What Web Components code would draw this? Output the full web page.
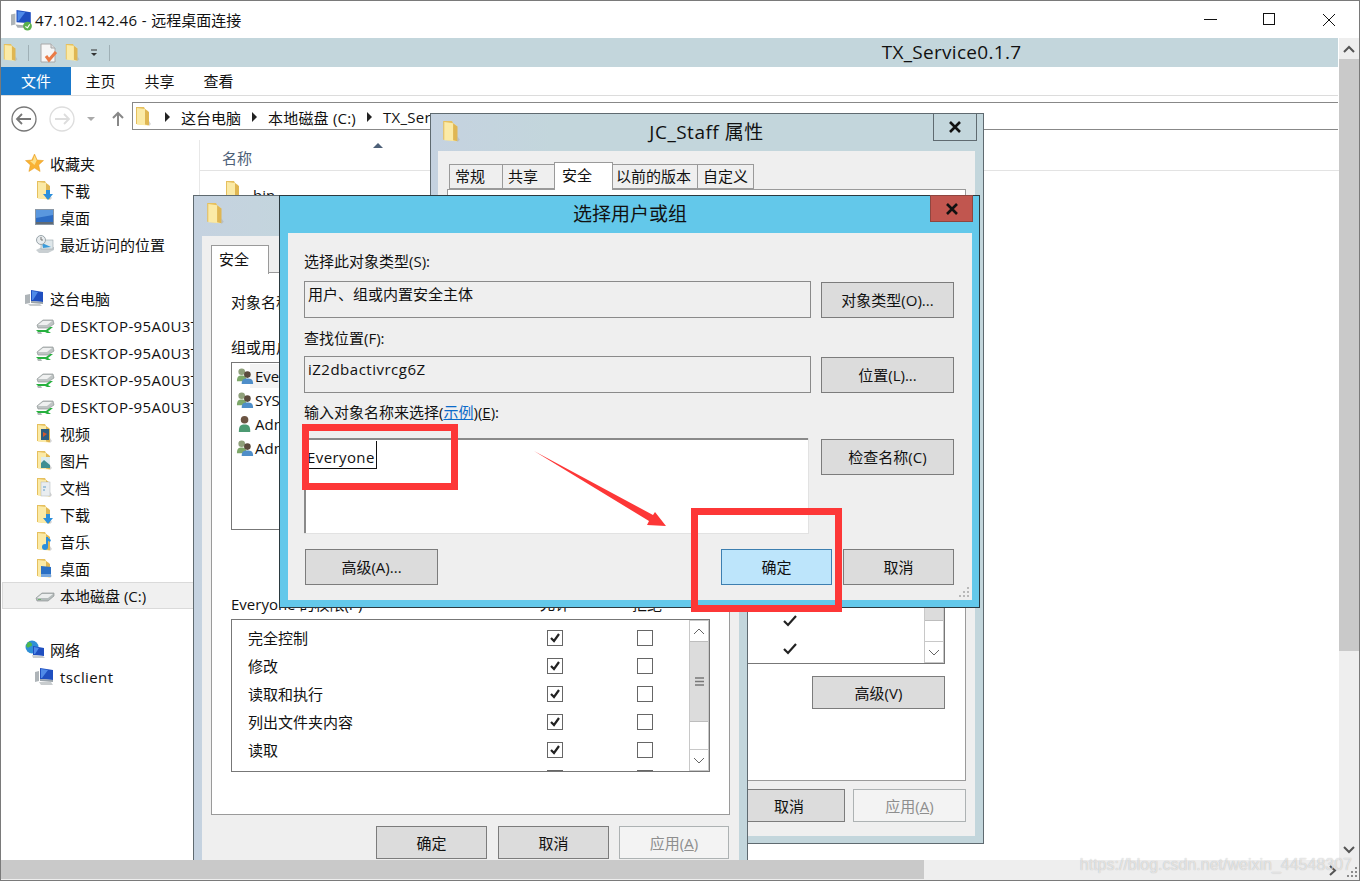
<!doctype html>
<html lang="zh">
<head>
<meta charset="utf-8">
<title>47.102.142.46 - 远程桌面连接</title>
<style>
  html, body { margin: 0; padding: 0; background: #fff; }
  body { width: 1360px; height: 881px; overflow: hidden; font: 15px "Open Sans", "Noto Sans CJK SC", sans-serif; color: #111; }
</style>
</head>
<body>
<rdp-app></rdp-app>
<script>
// tall narrow win8 folder, the special folders draw on top of it
const FOLDER = `<path d="M2 0h8l1 2v16l-9-1z" fill="#e6c05e"/><path d="M3 1l8 1 3 2v14.500l-11-1z" fill="#fbeaa6"/><path d="M11 2l4 3v13.500l-4-1z" fill="#dfb653"/><path d="M15 14l2 3-2 2z" fill="#aaa" opacity=".5"/>`;

const ICONS = {
  folder: FOLDER,
  star: `<path d="M9.500 0l2.700 6 6.300.6-4.800 4.300 1.400 6.600-5.600-3.400-5.600 3.400 1.400-6.600L.500 6.600 6.800 6z" fill="#f9b233" stroke="#e59a20" stroke-width=".5"/><path d="M9.500 1.500l2.200 5-2.200 4.500-4.500-4 3-.5z" fill="#fde08a"/>`,
  download: FOLDER + `<path d="M11 9h4v4h3l-5 6-5-6h3z" fill="#2b8fdc"/>`,
  desktop: `<rect x="0" y="1" width="19" height="16" fill="#8a97a5"/><rect x="1" y="2" width="17" height="12" fill="#2d6cc4"/><path d="M1 2h17v5L1 10z" fill="#5a97de"/><rect x="1" y="14" width="17" height="2" fill="#5f6a74"/>`,
  recent: `<path d="M1 15l6-3h12v3l-6 3H4z" fill="#c9cfd2"/><rect x="6" y="5" width="12" height="9" fill="#dfe7ea" stroke="#9aa5aa" stroke-width=".6"/><path d="M7 8l9 4-8 1z" fill="#3a9ad9"/><circle cx="6" cy="5" r="4.500" fill="#e8ecee" stroke="#9aa5aa"/><path d="M6 2v3h2" stroke="#777" fill="none"/>`,
  computer: `<path d="M6 1l12 2v10L6 12z" fill="#1f4fc0"/><path d="M7 2l6 1-5 8-1 0z" fill="#4f8ae8"/><path d="M6 12l12 1 0 2-12-1z" fill="#9aa3aa"/><path d="M0 6l5-1v9l-5 1z" fill="#aeb4b8"/><path d="M3 15l12 0 2 2H5z" fill="#c8ccce"/>`,
  netdrive: `<path d="M2 9l6-5h10l1 4-6 4H3z" fill="#bfc4c4" stroke="#8f9696" stroke-width=".7"/><path d="M3 9l5-4h9l-5 4z" fill="#f0f1f1"/><path d="M1 14h10l4-3h3l-5 4 3 2h-4l-2-1H3z" fill="#27b13f"/><path d="M2 16h4l1 2H3z" fill="#b3b8b8"/>`,
  videos: FOLDER + `<rect x="6" y="5" width="8" height="11" fill="#2c5d82"/><path d="M8 8l4 2-4 3z" fill="#d5572c"/>`,
  pictures: FOLDER + `<rect x="6" y="6" width="9" height="11" fill="#dcecef"/><path d="M6 12l3-3 6 5v3H6z" fill="#3f8f92"/>`,
  docs: FOLDER + `<rect x="6" y="4" width="9" height="14" fill="#e9edf0" stroke="#aeb6bb" stroke-width=".5"/><path d="M8 9h3M8 12h2" stroke="#5b9bc7"/>`,
  music: FOLDER + `<path d="M12 5v10" stroke="#2b8fdc" stroke-width="2"/><circle cx="10" cy="15" r="3" fill="#2b8fdc"/><path d="M12 5l4 3-1 2-3-2z" fill="#2b8fdc"/>`,
  deskfolder: FOLDER + `<path d="M6 7l10 1v10H6z" fill="#2a6fc4"/><path d="M6 15h10v3H6z" fill="#77a7de"/>`,
  disk: `<path d="M1 12l6-5h12v3l-6 5H2z" fill="#b4bbbb" stroke="#8f9696" stroke-width=".7"/><path d="M2 12l5-4h11l-5 4z" fill="#eceeee"/><path d="M3 13h3v1H3z" fill="#6fb36f"/>`,
  globe: `<circle cx="7" cy="7" r="6.500" fill="#2f8fd6"/><path d="M3 2c3 0 4 1 4 3s-3 1-4 3l-2-2zM8 9l3-1 1 2-3 3z" fill="#4db84c"/><path d="M8 6l11 2v8L8 15z" fill="#1f4fc0"/><path d="M9 7l5 1-4 6H9z" fill="#4f8ae8"/><path d="M7 15l11 1 2 2H8z" fill="#c8ccce"/>`,
  monitor: `<path d="M5 1l13 2v10L5 12z" fill="#1f4fc0"/><path d="M6 2l7 1-6 8H6z" fill="#4f8ae8"/><path d="M0 5l4-1v10l-4 1z" fill="#aeb4b8"/><path d="M5 12l13 1v2L5 14z" fill="#9aa3aa"/><path d="M4 15h12l2 3H6z" fill="#c8ccce"/>`,
  rdp: `<path d="M5 1l13 2v10L5 12z" fill="#1f4fc0"/><path d="M6 2l7 1-6 8H6z" fill="#4f8ae8"/><path d="M0 5l4-1v10l-4 1z" fill="#aeb4b8"/><path d="M4 14l10 1 1 2H6z" fill="#a9aeb2"/><circle cx="15" cy="15.500" r="4" fill="#5bb04c"/><path d="M13 16l2 1 2-3" stroke="#fff" fill="none"/>`,
  group: `<circle cx="6" cy="5" r="3.500" fill="#8fa07a"/><path d="M1 15c0-5 2-6 5-6s5 1 5 6z" fill="#7da86a"/><circle cx="12" cy="8" r="3.500" fill="#5a4a3c"/><path d="M6 18c0-5 2-6 6-6s6 1 6 6z" fill="#4f8ec9"/>`,
  user: `<circle cx="9" cy="5" r="4" fill="#6b5442"/><path d="M3 18c0-7 2-8 6-8s6 1 6 8z" fill="#4c9a72"/>`,
  note: `<path d="M2 1h10l4 4v14H2z" fill="#f6f6f6" stroke="#a8a8a8"/><path d="M12 1v4h4" fill="#ddd" stroke="#a8a8a8"/><path d="M7 13l3 4 7-8" fill="none" stroke="#ea7a45" stroke-width="3"/>`
};

class AppIcon extends HTMLElement {
  constructor() {
    super();
    this.attachShadow({ mode: 'open' });
  }
  connectedCallback() {
    const name = this.getAttribute('name');
    const size = this.getAttribute('size') || 20;
    this.shadowRoot.innerHTML = `
      <style>:host { display: inline-block; line-height: 0; flex: none; } svg { display: block; }</style>
      <svg width="${size}" height="${size}" viewBox="0 0 20 20">${ICONS[name] || ''}</svg>`;
  }
}

class WinButton extends HTMLElement {
  constructor() {
    super();
    this.attachShadow({ mode: 'open' }).innerHTML = `
      <style>
        :host {
          display: flex; align-items: center; justify-content: center;
          box-sizing: border-box; height: 36px; border: 1px solid #7c7c7c; padding-bottom: 1px;
          background: #dcdcdc; font-size: 15px; color: #111; flex: none; white-space: nowrap;
        }
        :host([primary]) { background: #bde5fb; border-color: #3d7fb0; }
        :host([disabled]) { background: #f3f3f3; border-color: #adb2b3; color: #8e8e8e; }
      </style>
      <slot></slot>`;
  }
}

class NavItem extends HTMLElement {
  constructor() {
    super();
    this.attachShadow({ mode: 'open' });
  }
  connectedCallback() {
    const head = this.hasAttribute('head');
    this.shadowRoot.innerHTML = `
      <style>
        :host {
          display: flex; align-items: center; gap: 5px; height: 27px; box-sizing: border-box;
          padding-left: ${head ? 24 : 34}px; white-space: nowrap; overflow: hidden; font-size: 15px; color: #111;
        }
        :host([selected]) { background: #f0f0f0; box-shadow: inset 0 0 0 1px #dadada; margin-left: 1px; padding-left: 33px; }
      </style>
      <app-icon name="${this.getAttribute('icon')}"></app-icon><slot></slot>`;
  }
}

class FloatWindow extends HTMLElement {
  constructor() {
    super();
    this.attachShadow({ mode: 'open' });
  }
  connectedCallback() {
    const a = n => this.getAttribute(n);
    const front = this.hasAttribute('front');
    this.shadowRoot.innerHTML = `
      <style>
        :host {
          position: absolute; box-sizing: border-box; left: ${a('x')}px; top: ${a('y')}px; width: ${a('w')}px; height: ${a('h')}px;
          background: ${front ? '#63c8ea' : 'linear-gradient(90deg,#c5d2e0,#c3d6dc 22%)'};
          border: 1px solid ${front ? '#2b3a40' : '#5f6a70'};
          display: flex; flex-direction: column;
          padding: 0 ${a('padr') || 8}px ${a('padb') || 7}px ${a('padl') || 8}px;
        }
        .bar { height: ${a('bar') || 36}px; flex: none; display: flex; align-items: center; justify-content: center; font-size: 19px; color: #111; position: relative; box-sizing: border-box; padding-bottom: 3px; }
        .bar app-icon { position: absolute; left: ${a('iconx') || 3}px; top: 7px; }
        .close { position: absolute; right: ${front ? -1 : -2}px; top: -1px; height: ${front ? 27 : 28}px; width: ${front ? 43 : 44}px; box-sizing: border-box;
          border: 1px solid ${front ? '#8f4640' : '#5f6a70'}; background: ${front ? '#c1564f' : '#c3d6dc'};
          display: flex; align-items: center; justify-content: center; }
        .body { flex: 1; min-height: 0; background: #efefef; position: relative; }
      </style>
      <div class="bar">
        ${front ? '' : '<app-icon name="folder" size="22"></app-icon>'}
        <slot name="title"></slot>
        ${a('close') !== null ? `<div class="close"><svg width="14" height="12" viewBox="0 0 14 12"><path d="M2 1l10 10M12 1L2 11" stroke="#111" stroke-width="2.600"/></svg></div>` : ''}
      </div>
      <div class="body"><slot></slot></div>`;
  }
}

class TabStrip extends HTMLElement {
  constructor() {
    super();
    this.attachShadow({ mode: 'open' }).innerHTML = `
      <style>
        :host { display: flex; align-items: flex-end; height: 25px; font-size: 15px; position: relative; z-index: 1; }
        ::slotted(span) { box-sizing: border-box; height: 25px; border: 1px solid #9a9a9a; margin-left: -1px;
          padding-left: 5px; padding-bottom: 2px; display: flex; align-items: center; background: #efefef; }
        ::slotted(span.on) { height: 28px; background: #fff; border-bottom: 0; position: relative; top: 1px; }
      </style>
      <slot></slot>`;
  }
}

class PermRow extends HTMLElement {
  constructor() {
    super();
    this.attachShadow({ mode: 'open' });
  }
  connectedCallback() {
    this.shadowRoot.innerHTML = `
      <style>
        :host { display: grid; grid-template-columns: 299px 90px 1fr; align-items: center; height: 28px; padding-left: 16px; font-size: 15px; }
        span { margin-top: -2px; }
        i { display: block; box-sizing: border-box; width: 16px; height: 16px; border: 1px solid #666; background: #fff; }
        svg { display: block; margin: 1px; }
      </style>
      <span><slot></slot></span>
      <i><svg width="12" height="12" viewBox="0 0 12 12"><path d="M2 6l3 3 5-7" fill="none" stroke="#222" stroke-width="2.200"/></svg></i>
      <i></i>`;
  }
}

class VScroll extends HTMLElement {
  constructor() {
    super();
    this.attachShadow({ mode: 'open' });
  }
  connectedCallback() {
    this.shadowRoot.innerHTML = `
      <style>
        :host { display: flex; flex-direction: column; width: 20px; box-sizing: border-box; border: 1px solid #c8c8c8; background: #fff; flex: none; }
        .b { height: 20px; display: flex; align-items: center; justify-content: center; background: #fff; flex: none; }
        .t { height: ${this.getAttribute('thumb')}px; background: #dcdcdc; border: solid #bdbdbd; border-width: 1px 0; box-sizing: border-box; display: flex; align-items: center; justify-content: center; flex: none; }
        .f { flex: 1; }
        .d { height: 20px; display: flex; align-items: center; justify-content: center; border-top: 1px solid #c8c8c8; flex: none; }
      </style>
      <div class="b"><svg width="12" height="7" viewBox="0 0 12 7"><path d="M1 6l5-5 5 5" fill="none" stroke="#666"/></svg></div>
      <div class="t"><svg width="9" height="9" viewBox="0 0 9 9"><path d="M0 1h9M0 4.500h9M0 8h9" stroke="#777" stroke-width="1.500"/></svg></div>
      <div class="f"></div>
      <div class="d"><svg width="12" height="7" viewBox="0 0 12 7"><path d="M1 1l5 5 5-5" fill="none" stroke="#666"/></svg></div>`;
  }
}

class RedFrame extends HTMLElement {
  constructor() {
    super();
    this.attachShadow({ mode: 'open' });
  }
  connectedCallback() {
    const a = n => this.getAttribute(n);
    this.shadowRoot.innerHTML = `
      <style>
        :host { position: absolute; box-sizing: border-box; left: ${a('x')}px; top: ${a('y')}px; width: ${a('w')}px; height: ${a('h')}px; border: 7px solid #fd3737; }
      </style>`;
  }
}

class ExplorerTop extends HTMLElement {
  constructor() {
    super();
    this.attachShadow({ mode: 'open' }).innerHTML = `
      <style>
        :host { display: block; }
        .title { height: 37px; display: flex; align-items: center; padding-left: 10px; gap: 2px; font-size: 15px; position: relative; }
        .lat { letter-spacing: .38px; }
        .caps { position: absolute; right: 0; top: 0; display: flex; }
        .caps div { width: 59px; height: 37px; display: flex; align-items: center; justify-content: center; }
        .qat { height: 29px; margin-right: 21px; background: #c3d6dc; display: flex; align-items: center; position: relative; padding-left: 1px; }
        .qat b { width: 1px; height: 16px; background: #9fb0b6; }
        .qat .name { position: absolute; left: 0; right: 0; padding-left: 564px; text-align: center; font-size: 19px; letter-spacing: .3px; top: 1px; }
        .tabs { height: 28px; display: flex; align-items: center; margin-right: 21px; font-size: 15px; }
        .tabs span { width: 59px; text-align: center; margin-top: -1px; }
        .tabs .file { width: 70px; height: 28px; line-height: 29px; background: #1a79cb; color: #fff; margin-top: 0; }
        .rule { height: 1px; background: #dcdcdc; margin-right: 21px; }
        .addr { height: 35px; display: flex; align-items: center; margin-right: 21px; position: relative; }
        .nav { width: 131px; display: flex; align-items: center; margin-top: 10px; }
        .box { flex: 1; box-sizing: border-box; height: 28px; border: 1px solid #888; border-right: 0; display: flex; align-items: center; padding: 2px 0 0 1px; font-size: 15px; gap: 11px; margin-top: 5px; white-space: nowrap; }
        .box i { width: 0; height: 0; border: 5px solid transparent; border-left: 5px solid #222; border-right: 0; }
      </style>
      <div class="title">
        <app-icon name="rdp" size="22"></app-icon>
        <span><span class="lat">47.102.142.46 - </span>远程桌面连接</span>
        <div class="caps">
          <div><svg width="14" height="2"><rect width="13" height="1" fill="#111"/></svg></div>
          <div><svg width="13" height="13"><rect x=".5" y=".5" width="11" height="11" fill="none" stroke="#111"/></svg></div>
          <div style="margin-right:1px"><svg width="14" height="14"><path d="M1 1l12 12M13 1L1 13" stroke="#111"/></svg></div>
        </div>
      </div>
      <div class="qat">
        <app-icon name="folder" size="18"></app-icon>
        <b style="margin-left:8px"></b>
        <app-icon name="note" size="20" style="margin-left:10px"></app-icon>
        <app-icon name="folder" size="18" style="margin-left:5px"></app-icon>
        <svg width="12" height="12" viewBox="0 0 12 12" style="margin-left:6px"><path d="M3 3h6" stroke="#333"/><path d="M3 6h6l-3 3z" fill="#333"/></svg>
        <b style="margin-left:9px"></b>
        <div class="name">TX_Service0.1.7</div>
      </div>
      <div class="tabs">
        <span class="file">文件</span><span>主页</span><span>共享</span><span>查看</span>
      </div>
      <div class="rule"></div>
      <div class="addr">
        <div class="nav">
          <svg width="131" height="28" viewBox="0 0 131 28">
            <circle cx="23" cy="14" r="12" fill="#fff" stroke="#777" stroke-width="1.300"/>
            <path d="M30 14H16M21 9l-5 5 5 5" fill="none" stroke="#777" stroke-width="1.800"/>
            <circle cx="61" cy="14" r="12" fill="#fff" stroke="#ddd" stroke-width="1.300"/>
            <path d="M54 14h14M63 9l5 5-5 5" fill="none" stroke="#ddd" stroke-width="1.800"/>
            <path d="M86 12h8l-4 4z" fill="#aaa"/>
            <path d="M117 21V8M112 13l5-5 5 5" fill="none" stroke="#888" stroke-width="2"/>
          </svg>
        </div>
        <div class="box">
          <app-icon name="folder" size="20"></app-icon><i></i><span>这台电脑</span><i></i><span style="letter-spacing:.2px">本地磁盘 (C:)</span><i></i><span style="letter-spacing:.3px">TX_Service</span>
        </div>
      </div>`;
  }
}

class NavPane extends HTMLElement {
  constructor() {
    super();
    this.attachShadow({ mode: 'open' }).innerHTML = `
      <style>
        :host { display: block; width: 193px; padding-top: 19px; flex: none; }
        .gap { height: 27px; }
        .lat { letter-spacing: .4px; }
      </style>
      <nav-item head icon="star">收藏夹</nav-item>
      <nav-item icon="download">下载</nav-item>
      <nav-item icon="desktop">桌面</nav-item>
      <nav-item icon="recent">最近访问的位置</nav-item>
      <div class="gap"></div>
      <nav-item head icon="computer">这台电脑</nav-item>
      <nav-item class="lat" icon="netdrive">DESKTOP-95A0U3T</nav-item>
      <nav-item class="lat" icon="netdrive">DESKTOP-95A0U3T</nav-item>
      <nav-item class="lat" icon="netdrive">DESKTOP-95A0U3T</nav-item>
      <nav-item class="lat" icon="netdrive">DESKTOP-95A0U3T</nav-item>
      <nav-item icon="videos">视频</nav-item>
      <nav-item icon="pictures">图片</nav-item>
      <nav-item icon="docs">文档</nav-item>
      <nav-item icon="download">下载</nav-item>
      <nav-item icon="music">音乐</nav-item>
      <nav-item icon="deskfolder">桌面</nav-item>
      <nav-item selected icon="disk">本地磁盘 (C:)</nav-item>
      <div class="gap"></div>
      <nav-item head icon="globe">网络</nav-item>
      <nav-item class="lat" icon="monitor">tsclient</nav-item>`;
  }
}

class FilePane extends HTMLElement {
  constructor() {
    super();
    this.attachShadow({ mode: 'open' }).innerHTML = `
      <style>
        :host { display: block; flex: 1; margin-left: 5px; margin-top: 9px; border-left: 1px solid #e8e8e8; }
        .head { height: 30px; border-bottom: 1px solid #e3e3e3; padding-left: 22px; line-height: 36px; color: #4d6078; font-size: 15px; position: relative; }
        .head i { position: absolute; left: 173px; top: 3px; width: 0; height: 0; border: 5px solid transparent; border-bottom: 5px solid #4d6078; border-top: 0; }
        .row { display: flex; align-items: flex-start; gap: 9px; padding: 10px 0 0 24px; }
        .row span { margin-top: 4px; }
      </style>
      <div class="head">名称<i></i></div>
      <div class="row"><app-icon name="folder" size="20"></app-icon><span>bin</span></div>`;
  }
}

class RdpApp extends HTMLElement {
  constructor() {
    super();
    this.attachShadow({ mode: 'open' }).innerHTML = `
      <style>
        :host { display: block; position: relative; width: 1360px; height: 881px; box-sizing: border-box; border: 1px solid #7a7a7a; overflow: hidden; background: #fff; }
        .main { position: absolute; inset: 0; display: flex; flex-direction: column; }
        .content { flex: 1; display: flex; min-height: 0; }
        .vbar { position: absolute; right: 0; top: 37px; bottom: 20px; width: 20px; background: #eee; display: flex; flex-direction: column; align-items: center; }
        .vbar .up, .vbar .dn { height: 21px; width: 100%; display: flex; align-items: center; justify-content: center; flex: none; }
        .vbar .th { height: 592px; width: 100%; background: #c9c9c9; flex: none; }
        .vbar .fill { flex: 1; }
        .hbar { position: absolute; left: 0; right: 0; bottom: 0; height: 20px; background: #eee; z-index: 5; }
        .hbar .th { position: absolute; left: 0; top: 0; bottom: 1px; width: 923px; background: #c9c9c9; }
        .hbar svg { position: absolute; }
        .mark { position: absolute; right: 7px; bottom: 6px; font: 16px "Liberation Sans", sans-serif; color: rgba(255,255,255,.6); text-shadow: 0 0 1px rgba(0,0,0,.28); z-index: 6; white-space: nowrap; }
        .lbl { font-size: 15px; display: block; white-space: nowrap; }
        .field { box-sizing: border-box; height: 37px; border: 1px solid #8a8a8a; padding: 2px 3px; font-size: 15px; }
        a { color: #0b6ac9; text-decoration: underline; }

        /* select users dialog */
        .sel { box-sizing: border-box; height: 100%; padding: 18px 17px 0 16px; display: grid; grid-template-columns: 507px 133px; column-gap: 10px; align-content: start; }
        .sel .lbl { grid-column: 1 / 3; height: 21px; line-height: 20px; margin-bottom: 7px; }
        .sel .field { margin-bottom: 10px; }
        .sel .field + win-button { align-self: start; margin-top: 1px; }
        .sel .area { box-sizing: border-box; width: 505px; height: 96px; background: #fff; border: solid #e2e2e2; border-width: 0 1px 1px 0; box-shadow: inset 2px 2px 0 #8a8a8a; padding: 9px 3px; font-size: 15px; line-height: 20px; }
        .sel .area + win-button { align-self: start; margin-top: 1px; }
        .sel .area span { border-bottom: 1px solid #111; border-right: 1px solid #111; letter-spacing: .4px; padding: 6px 1px 1px 0; }
        .foot { grid-column: 1 / 3; display: flex; gap: 11px; margin-top: 15px; padding-left: 1px; }
        .grip { position: absolute; right: 2px; bottom: 2px; }

        /* security page of the middle window */
        .panel { position: absolute; background: #fff; border: 1px solid #9a9a9a; box-sizing: border-box; }
        .list { position: absolute; box-sizing: border-box; border: 1px solid #777; background: #fff; }
        .member { display: flex; align-items: center; height: 24px; padding-left: 3px; font-size: 15px; white-space: nowrap; }
        .perm { display: flex; }
        .rows { flex: 1; padding-top: 4px; overflow: hidden; }
        .btnrow { position: absolute; display: flex; }
      </style>
      <div class="main">
        <explorer-top></explorer-top>
        <div class="content"><nav-pane></nav-pane><file-pane></file-pane></div>
      </div>
      <div class="vbar">
        <div class="up"><svg width="12" height="8" viewBox="0 0 12 8"><path d="M1 7l5-5 5 5" fill="none" stroke="#555" stroke-width="2"/></svg></div>
        <div class="th"></div><div class="fill"></div>
        <div class="dn"><svg width="12" height="8" viewBox="0 0 12 8"><path d="M1 1l5 5 5-5" fill="none" stroke="#555" stroke-width="2"/></svg></div>
      </div>

      <float-window x="429" y="112" w="554" h="731" close bar="37" iconx="3" padl="7">
        <span slot="title" style="letter-spacing:.5px">JC_Staff 属性</span>
        <tab-strip style="position:absolute;left:12px;top:13px">
          <span style="width:54px">常规</span><span style="width:53px">共享</span><span class="on" style="width:59px;padding-left:7px;padding-bottom:5px">安全</span><span style="width:86px;padding-left:3px">以前的版本</span><span style="width:57px">自定义</span>
        </tab-strip>
        <div class="panel" style="left:9px;top:38px;width:519px;height:592px"></div>
        <div class="list" style="left:119px;top:300px;width:388px;height:213px">
          <div style="position:absolute;inset:0;display:flex;flex-direction:column;align-items:flex-end"><v-scroll thumb="148" style="height:100%"></v-scroll></div>
          <svg style="position:absolute;left:224px;top:162px" width="16" height="44" viewBox="0 0 16 44"><path d="M2 7l4 4 8-9M2 35l4 4 8-9" fill="none" stroke="#222" stroke-width="2.200"/></svg>
        </div>
        <win-button style="position:absolute;left:374px;top:525px;width:133px;height:33px">高级(V)</win-button>
        <div class="btnrow" style="left:295px;top:638px;gap:8px">
          <win-button style="width:112px;height:33px">取消</win-button>
          <win-button disabled style="width:113px;height:33px"><span>应用(<u>A</u>)</span></win-button>
        </div>
      </float-window>

      <float-window x="192" y="194" w="555" h="700" bar="40" iconx="3">
        <tab-strip style="position:absolute;left:10px;top:8px;height:29px"><span class="on" style="height:29px;padding-left:7px;padding-bottom:3px;width:58px">安全</span></tab-strip>
        <div class="panel" style="left:9px;top:36px;width:519px;height:543px"></div>
        <span class="lbl" style="position:absolute;left:29px;top:55px">对象名称(O):</span>
        <span class="lbl" style="position:absolute;left:29px;top:100px">组或用户名(G):</span>
        <div class="list" style="left:29px;top:126px;width:300px;height:168px;padding:1px">
          <div class="member" style="background:linear-gradient(90deg,#fff 17px,#f3f3f3 17px)"><app-icon name="group" size="19"></app-icon>Everyone</div>
          <div class="member"><app-icon name="group" size="19"></app-icon>SYSTEM</div>
          <div class="member"><app-icon name="user" size="19"></app-icon>Administrator</div>
          <div class="member"><app-icon name="group" size="19"></app-icon>Administrators</div>
        </div>
        <span class="lbl" style="position:absolute;left:29px;top:357px">Everyone 的权限(P)</span>
        <span class="lbl" style="position:absolute;left:338px;top:357px">允许</span>
        <span class="lbl" style="position:absolute;left:430px;top:357px">拒绝</span>
        <div class="list perm" style="left:29px;top:383px;width:479px;height:153px">
          <div class="rows">
            <perm-row>完全控制</perm-row><perm-row>修改</perm-row><perm-row>读取和执行</perm-row><perm-row>列出文件夹内容</perm-row><perm-row>读取</perm-row><perm-row></perm-row>
          </div>
          <v-scroll thumb="81"></v-scroll>
        </div>
        <div class="btnrow" style="left:174px;top:590px;gap:11px">
          <win-button style="width:111px;height:33px">确定</win-button>
          <win-button style="width:111px;height:33px">取消</win-button>
          <win-button disabled style="width:110px;height:33px;margin-left:-1px"><span>应用(<u>A</u>)</span></win-button>
        </div>
      </float-window>

      <float-window front x="278" y="194" w="701" h="413" close bar="37" padl="8" padr="7">
        <span slot="title">选择用户或组</span>
        <div class="sel">
          <span class="lbl" style="margin-bottom:9px">选择此对象类型(S):</span>
          <div class="field" style="padding-top:1px">用户、组或内置安全主体</div>
          <win-button>对象类型(O)...</win-button>
          <span class="lbl">查找位置(F):</span>
          <div class="field" style="letter-spacing:.5px">iZ2dbactivrcg6Z</div>
          <win-button>位置(L)...</win-button>
          <span class="lbl" style="margin-top:-1px;margin-bottom:15px">输入对象名称来选择(<a>示例</a>)(<u>E</u>):</span>
          <div class="area"><span>Everyone</span></div>
          <win-button>检查名称(C)</win-button>
          <div class="foot">
            <win-button style="width:133px">高级(A)...</win-button>
            <div style="flex:1"></div>
            <win-button primary style="width:111px">确定</win-button>
            <win-button style="width:111px">取消</win-button>
          </div>
        </div>
        <svg class="grip" width="12" height="12" viewBox="0 0 12 12"><path d="M9 1h2v2H9zM5 5h2v2H5zM9 5h2v2H9zM1 9h2v2H1zM5 9h2v2H5zM9 9h2v2H9z" fill="#b9b9b9"/></svg>
      </float-window>

      <red-frame x="301" y="423" w="156" h="66"></red-frame>
      <red-frame x="690" y="507" w="151" h="104"></red-frame>
      <svg style="position:absolute;left:0;top:0;pointer-events:none" width="1360" height="881">
        <path d="M533 450L652 514L654 511L665 525L646 524L648 520Z" fill="#fd3737"/>
      </svg>

      <div class="hbar"><div class="th"></div>
        <svg style="right:22px;top:5px" width="8" height="11" viewBox="0 0 8 11"><path d="M1 1l5 4.500-5 4.500" fill="none" stroke="#555" stroke-width="2"/></svg>
        <svg style="right:1px;top:6px" width="12" height="12" viewBox="0 0 12 12"><path d="M9 1h2v2H9zM5 5h2v2H5zM9 5h2v2H9zM1 9h2v2H1zM5 9h2v2H5zM9 9h2v2H9z" fill="#8a8a8a"/></svg>
      </div>
      <div class="mark">https://blog.csdn.net/weixin_44548307</div>`;
  }
}

customElements.define('app-icon', AppIcon);
customElements.define('win-button', WinButton);
customElements.define('nav-item', NavItem);
customElements.define('float-window', FloatWindow);
customElements.define('tab-strip', TabStrip);
customElements.define('perm-row', PermRow);
customElements.define('v-scroll', VScroll);
customElements.define('red-frame', RedFrame);
customElements.define('explorer-top', ExplorerTop);
customElements.define('nav-pane', NavPane);
customElements.define('file-pane', FilePane);
customElements.define('rdp-app', RdpApp);
</script>
</body>
</html>
